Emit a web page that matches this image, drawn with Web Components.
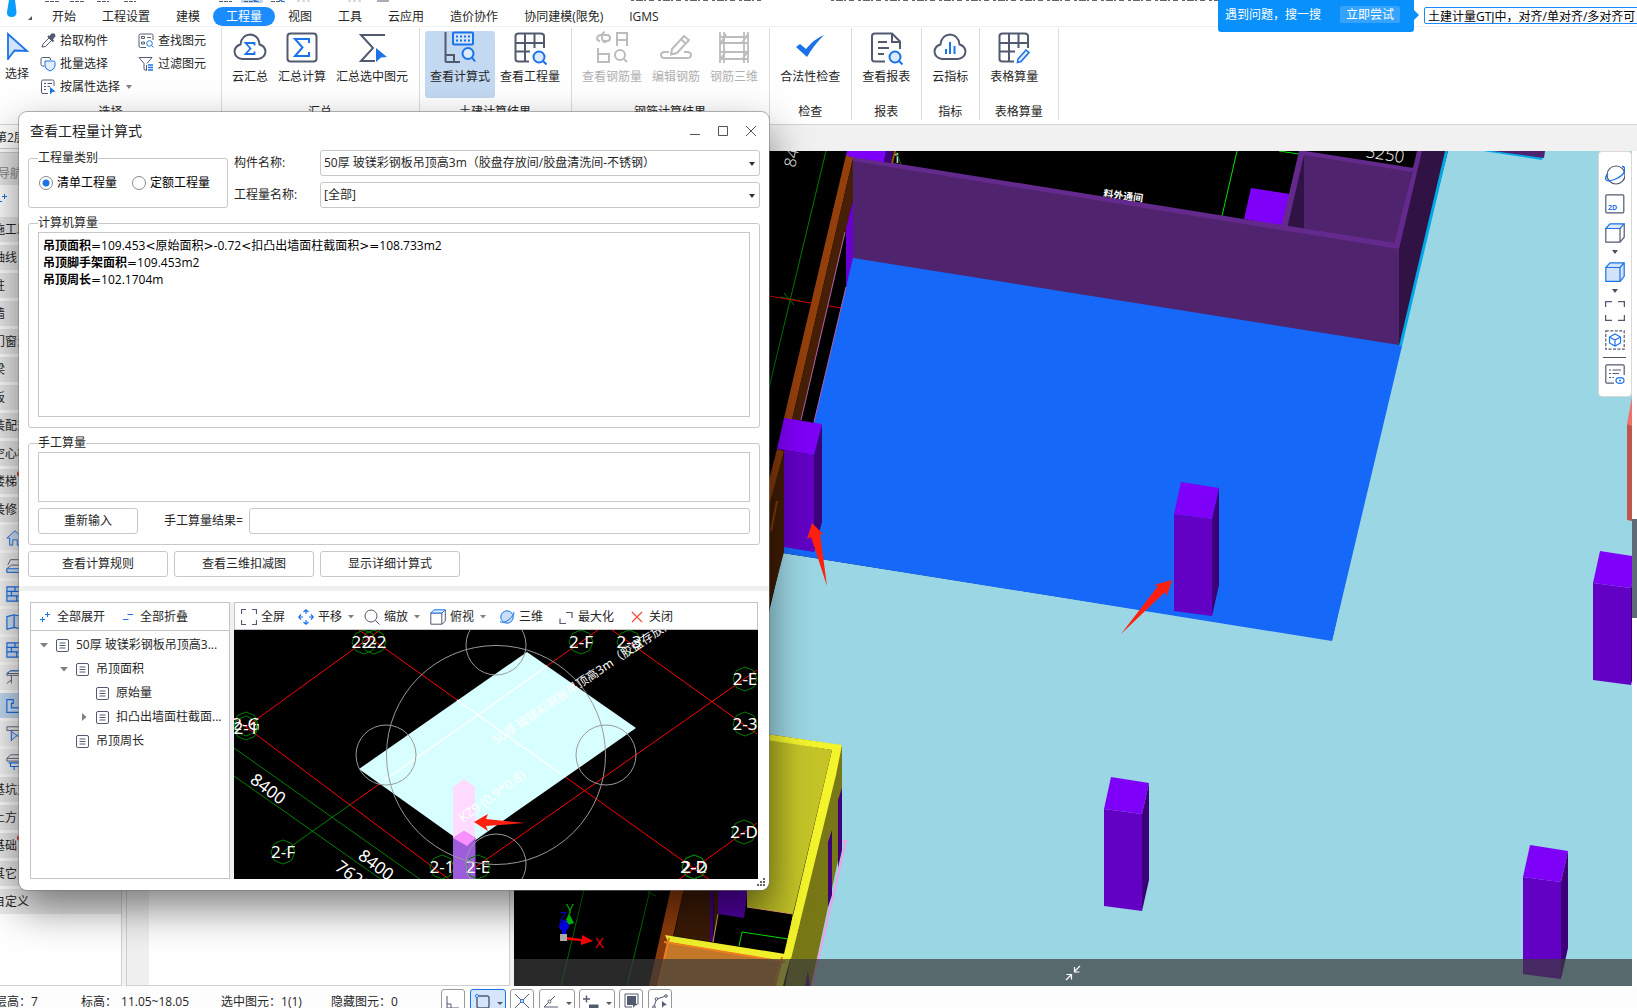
<!DOCTYPE html>
<html lang="zh-CN">
<head>
<meta charset="utf-8">
<title>土建计量平台</title>
<style>
html,body{margin:0;height:100%;overflow:hidden}
body{font:12px/18px "Open Sans","Noto Sans CJK SC",sans-serif;color:#262626;background:#f1f1f1}
</style>
</head>
<body>
<takeoff-app></takeoff-app>
<script>
const BASE = `*{box-sizing:border-box}button,input,textarea,select{font:inherit;color:inherit;margin:0}button{border:0;background:none;padding:0;white-space:nowrap;cursor:pointer}`;
function define(name, css, html, init) {
  const t = document.createElement('template');
  customElements.define(name, class extends HTMLElement {
    connectedCallback() {
      if (this.shadowRoot) return;
      const r = this.attachShadow({mode: 'open'});
      t.innerHTML = `<style>${BASE}${css}</style>` + (typeof html === 'function' ? html(this) : html);
      r.appendChild(t.content.cloneNode(true));
      if (init) init(this, r);
    }
  });
}

/* ---------- icons: [viewBox size, markup] ---------- */
const G = 'stroke="#525a70" fill="none"', B = 'stroke="#1a73e8" fill="none"', L = 'stroke="#bcbcbc" fill="none"';
const lens = `<circle cx="23" cy="23" r="5.5" fill="#dceafc" stroke="#1a73e8" stroke-width="2"/><path d="M27 27l3.500 3.500" ${B} stroke-width="2"/>`;
const page = `<rect x=".5" y=".5" width="12" height="12" rx="1.500" ${G}/><path d="M3.500 4h6M3.500 6.500h6M3.500 9h6" ${G}/>`;
const ICONS = {
  cursor: [28, `<path d="M5 2v25l6.500-8.500L24 19z" fill="#d3e3fa" stroke="#1a73e8" stroke-width="1.800"/>`],
  pick: [16, `<path d="M2 14l1-3 6-6 2.500 2.500-6 6z" ${G}/><path d="M8 3l5.500 5.500M9.500 4.500L12 1.500q2-1 2.500 1.500l-3 3.500z" stroke="#525a70" stroke-width="2" fill="#525a70"/>`],
  batch: [16, `<path d="M4.500 10H2.500Q1 10 1 8.500V3Q1 1.500 2.500 1.500H9Q10.500 1.500 10.500 3v1" ${G}/><path d="M5 5h8.500Q15 5 15 6.500V10Q14.500 13.500 10 15 5.500 13.500 5 10z" fill="#e3eefc" stroke="#1a73e8"/>`],
  attr: [16, `<path d="M8 14.500H3Q1.500 14.500 1.500 13V2.500Q1.500 1 3 1h9.500Q14 1 14 2.500V7" ${G}/><path d="M4 4.500h2M7.500 4.500H12M4 7.500h2M7.500 7.500H10M4 10.500h2" ${G}/><path d="M10 8l5.500 4.500-3 .5-2.500 2.500z" fill="#1a73e8"/>`],
  find: [16, `<path d="M8 14.500H2.500Q1 14.500 1 13V2.500Q1 1 2.500 1h11Q15 1 15 2.500V7" ${G}/><path d="M3.500 3.500h3v2h-3zM3.500 9h3v2h-3zM9 4.500h4" ${G}/><circle cx="11.500" cy="10.500" r="2.800" ${B}/><path d="M13.500 12.500l2 2" ${B}/>`],
  filter: [16, `<path d="M1 1.500h13L9 7.500M1 1.500l5 6v6l2.500 1V9" ${G}/><path d="M10 9h5M10 11.500h5M10 14h5" ${B} stroke-width="1.400"/>`],
  cloudsum: [34, `<path d="M9 28Q2 27 1.500 20.500 2 15 7.500 13.500 8.500 4 17 3.500 25.500 4 26.500 13.500 32 15 32.500 20.500 32 27 25 28z" ${G} stroke-width="2"/><path d="M21.500 14.500v-2.500H12.500l5 5.500-5 5.500h9V20.500" ${B} stroke-width="1.800"/>`],
  sum: [34, `<rect x="2.500" y="2.500" width="29" height="28" rx="3" ${G} stroke-width="2"/><path d="M24 12V8H10l7.500 8.500L10 25h14v-4" ${B} stroke-width="2"/>`],
  sumsel: [34, `<path d="M30 4H6l12 13L6 30h14" ${G} stroke-width="2"/><path d="M21 17l11 9-6 .5-5 4.500z" fill="#1a73e8"/>`],
  formula: [34, `<path d="M2.500 1v29q0 1 1 1H17M3 24h8v6" ${G} stroke-width="2"/><rect x="10" y="1.500" width="20" height="12" rx="1" fill="#d3e3fa" stroke="#1a73e8" stroke-width="2"/><path d="M13 5.500h15M13 9.500h15" stroke="#1a73e8" stroke-width="2" stroke-dasharray="2 2"/><circle cx="25" cy="22.500" r="5.500" fill="#dceafc" stroke="#1a73e8" stroke-width="2"/><path d="M29 26.500l3 4" ${B} stroke-width="2"/>`],
  table: [34, `<path d="M16 30.500H5.500Q2.500 30.500 2.500 28V5Q2.500 2.500 5.500 2.500h22Q31 2.500 31 5v12M2.500 12h28M2.500 20.500H17M12 2.500v28M21.500 2.500V17" ${G} stroke-width="2"/><g transform="translate(3 3)">${lens}</g>`],
  rebarq: [34, `<path d="M10 1q-4 1-3 6 1 5 4 4M2 7q1-3 4-3h6q3 0 3 3t-3 3H9M2 7q0 3 3 3" ${L} stroke-width="2"/><path d="M22 15V2h10v13M22 9h10M3 17v14h12M3 23h11v7" ${L} stroke-width="2"/><circle cx="25" cy="24" r="5" ${L} stroke-width="2"/><path d="M29 28l3 3" ${L} stroke-width="2"/>`],
  rebare: [34, `<path d="M13 18L25 5l5 4-12 13-6 1.500zM22 8l5 5M10 21H6q-4 0-4 3t4 3h22q4 0 4-3t-4-3h-3" ${L} stroke-width="2"/>`],
  rebar3: [34, `<path d="M3 1v31M7 1v31M27 1v31M31 1v31M3 6h28M3 12h28M3 21h28M3 28h28M3 14L9 3M25 12L31 3M3 29l6-9M25 29l6-9" ${L} stroke-width="1.800"/>`],
  check: [34, `<path d="M3 16l4-3 6 5Q21 8 31 4 21 14 14 26z" fill="#1a73e8"/>`],
  report: [34, `<path d="M16 30.500H6Q3 30.500 3 28V5Q3 2.500 6 2.500h17l8 8V18M23 3v8h8M9 11h9M9 17h11M9 23h6" ${G} stroke-width="2"/><g transform="translate(3 3)">${lens}</g>`],
  cloudbar: [34, `<path d="M9 28Q2 27 1.500 20.500 2 15 7.500 13.500 8.500 4 17 3.500 25.500 4 26.500 13.500 32 15 32.500 20.500 32 27 25 28z" ${G} stroke-width="2"/><path d="M13 23v-5M17 23V11M21.500 23v-8" ${B} stroke-width="2"/>`],
  sheet: [34, `<path d="M17 30.500H5.500Q2.500 30.500 2.500 28V5Q2.500 2.500 5.500 2.500h22Q31 2.500 31 5v12M2.500 12h28M2.500 20.500H18M12 2.500v28M21.500 2.500V17" ${G} stroke-width="2"/><path d="M21 28l8-9 3 2.500-8 9-3.500 1z" fill="#dceafc" stroke="#1a73e8" stroke-width="1.600"/>`],
  full: [16, `<path d="M.5 5V.5H5M11 .5h4.500V5M15.500 11v4.500H11M5 15.500H.5V11" ${G} stroke-width="1.200"/>`],
  pan: [16, `<path d="M5.500 3L8 .8 10.500 3M5.500 13L8 15.200 10.500 13M3 5.500L.8 8 3 10.500M13 5.500L15.200 8 13 10.500M8 1v4M8 11v4M1 8h4M11 8h4" ${B} stroke-width="1.200"/>`],
  zoom: [16, `<circle cx="7" cy="7" r="6" ${G}/><path d="M11.500 11.500l4 4" ${G}/>`],
  cube: [16, `<path d="M.8 4h11v11.200h-11z" ${G}/><path d="M12 15.200l3.300-3V1" ${G}/><path d="M.8 4L4 .8h11.300L12 4z" fill="#dceafc" stroke="#1a73e8"/>`],
  cubeb: [20, `<path d="M.8 5.500L5 .8h14.200v13.500l-4 5H.8zM15 5.500l4.200-4.700M.8 5.500H15v14" fill="#d3e3fa" stroke="#1a73e8" stroke-width="1.200"/>`],
  cubeg: [20, `<path d="M.8 5.500H15v13.700H.8zM15 19.200l4.200-5V1" ${G} stroke-width="1.200"/><path d="M.8 5.500L5 .8h14.200L15 5.500z" fill="#dceafc" stroke="#1a73e8" stroke-width="1.200"/>`],
  orbit: [16, `<circle cx="8" cy="8" r="6.200" fill="#c9defa" stroke="#1a73e8"/><path d="M1 12.500Q4 15 10 10.500 16.500 5 14.500 3" fill="none" stroke="#1a73e8"/>`],
  orbitg: [20, `<circle cx="11" cy="10" r="9" ${G} stroke-width="1.200"/><path d="M17 1.500q3.500 0 2.500 4.500-1 5-10 8.500Q2 17 .8 14.500 0 12 3 8.500" ${B} stroke-width="1.300"/>`],
  two: [20, `<rect x=".8" y=".8" width="18" height="18" rx="1" ${G} stroke-width="1.200"/><text x="3" y="16" font-family="Open Sans" font-weight="700" font-size="7" fill="#1a73e8">2D</text>`],
  fullb: [20, `<path d="M.6 6V.6H7M13 .6h6.400V6M19.400 14v5.400H13M7 19.400H.6V14" ${G} stroke-width="1.300"/>`],
  iso: [20, `<rect x=".8" y=".8" width="18.400" height="18.400" ${G} stroke-width="1.200" stroke-dasharray="3 1.500"/><path d="M10 4l5.500 3v6L10 16l-5.500-3V7zM4.500 7L10 10l5.500-3M10 10v6" ${B} stroke-width="1.200"/>`],
  eye: [20, `<path d="M9 19.200H2Q.8 19.200.8 18V2Q.8.8 2 .8h16q1.200 0 1.200 1.200v9M4 6h2M7.500 6H16M4 9.500h2M7.500 9.500H14M4 13.500h2M7.500 13.500H9" ${G} stroke-width="1.200"/><ellipse cx="15" cy="16.500" rx="4" ry="2.800" ${B} stroke-width="1.200"/><circle cx="15" cy="16.500" r="1" fill="#1a73e8"/>`],
  max: [16, `<path d="M8 3.500h6V9M2 9.500v5h6" ${G} stroke-width="1.200"/>`],
  x: [16, `<path d="M3 3l10 10M13 3L3 13" stroke="#f04a3e" fill="none" stroke-width="1.200"/>`],
  plus2: [10, `<path d="M7.500 0v5M5 2.500h5M2.500 5v5M0 7.500h5" ${B}/>`],
  minus2: [10, `<path d="M4.500 2.500H10M0 7.500h5.500" ${B}/>`],
  doc: [13, page],
  down: [10, `<path d="M1 3h8L5 7.500z" fill="#808080"/>`],
  right: [10, `<path d="M3 1v8l4.500-4z" fill="#808080"/>`],
  house: [20, `<path d="M1 10L10 2l9 8h-3v8h-3.500v-6h-5v6H4v-8z" fill="#d3e3fa" stroke="#1a73e8"/>`],
  roof: [20, `<path d="M2 9l3-6h14v6M1 13l5-4h14v8H1zM1 17h19" ${G}/><path d="M1 13h18v4H1z" fill="#d3e3fa" stroke="#1a73e8"/>`],
  brick: [20, `<path d="M1 2h18v16H1zM1 7h18M1 12h18M10 2v5M6 7v5M12 12v6" fill="#d3e3fa" stroke="#1a73e8" stroke-width="1.300"/>`],
  fold: [20, `<path d="M1 4l8-2 9 2v14l-9-2-8 2zM9 2v14" fill="#d3e3fa" stroke="#1a73e8" stroke-width="1.300"/>`],
  beam: [20, `<path d="M1 5l4-3h14v5H1zM6 7v9M6 12l-5 4M1 5h18" ${G}/><path d="M1 5l4-3h14" ${B}/>`],
  ceil: [20, `<path d="M1 3h7v4H6v5h13v5H1z" fill="#d3e3fa" stroke="#1a73e8" stroke-width="1.300"/>`],
  hang: [20, `<path d="M1 2h18M1 2v4h18M6 6v12" ${G}/><path d="M6 7l12 9V7L6 17z" fill="#d3e3fa" stroke="#1a73e8"/>`],
  pier: [20, `<path d="M1 6l4-4h14v4zM1 6v3h18" ${G}/><path d="M3 11h16M5 11v4h14M9 15v4" ${B} stroke-width="1.300"/>`]
};
define('ui-icon', ':host{display:block;flex:none}svg{display:block;width:100%;height:100%}', h => {
  const [s, m] = ICONS[h.getAttribute('name')];
  h.style.width = h.style.height = (h.getAttribute('size') || s) + 'px';
  return `<svg viewBox="0 0 ${s} ${s}" aria-hidden="true">${m}</svg>`;
});

/* ---------- top: tabs ---------- */
define('menu-tabs', `
:host{display:flex;height:27px;flex:none;background:#fff;border-bottom:1px solid #f0f0f0;align-items:flex-end;position:relative}
.logo{width:39px;height:26px;flex:none}
nav{display:flex;height:19px}
button{padding:0 13px;line-height:19px;border-radius:10px}
button[aria-current]{background:#1a8cff;color:#fff}
.slivers{position:absolute;left:39px;top:0;width:1180px;height:3px}
.tip{position:absolute;right:223px;top:0;height:32px;width:196px;background:#0a90fa;color:#fff;border-radius:0 0 3px 3px;display:flex;justify-content:space-between;align-items:center;padding:0 14px 3px 7px;z-index:2}
.tip::after{content:"";position:absolute;right:-5px;top:10px;border:5px solid transparent;border-right:0;border-left-color:#0a90fa}
.tip button{background:#35a3fb;border-radius:2px;width:60px;padding:0;height:17px;line-height:17px}
.search{position:absolute;left:calc(100% - 213px);top:7px;width:240px;height:17px;border:1px solid #1a8cff;border-radius:2px;padding:1px 3px 0;background:#fff;color:#000;line-height:15px}`,
`<svg class="logo" viewBox="0 0 39 26" aria-hidden="true"><path d="M9 0h6l1.500 12q0 5-5 5t-4.500-5z" fill="#0a9cff"/><path d="M32 16v4h-4z" fill="#555"/></svg>
<svg class="slivers" viewBox="0 0 1180 3" aria-hidden="true"><path d="M202 0h22v3h-22z" fill="#c3d9f1"/><path d="M6 1.500h14M31 1.500h14M58 1.500h12M85 1.500h12M180 1.500h13M205 1.500h14M232 1.500h12" stroke="#525a70" stroke-dasharray="4 1"/><path d="M214 0l6 2M240 0l6 2" stroke="#1a73e8"/><path d="M258 1h14M309 1h15" stroke="#bbb" stroke-dasharray="3 2"/><path d="M338 1h12" stroke="#525a70"/><path d="M592 .5h130M792 .5h388" stroke="#666" stroke-dasharray="3 2 7 1 2 3 5 4"/></svg>
<nav><button>开始</button><button>工程设置</button><button>建模</button><button aria-current="page">工程量</button><button>视图</button><button>工具</button><button>云应用</button><button>造价协作</button><button>协同建模(限免)</button><button>IGMS</button></nav>
<div class="tip"><span>遇到问题，搜一搜</span><button>立即尝试</button></div>
<input class="search" aria-label="搜索" value="土建计量GTJ中，对齐/单对齐/多对齐可">`);

/* ---------- ribbon ---------- */
define('ribbon-button', `
:host{display:block}
button{display:flex;flex-direction:column;align-items:center;padding:0 5px;height:67px;border-radius:3px;width:100%}
span{margin-top:3px}
:host([active]) button{background:#c3d9f1}
:host([disabled]) button{color:#b0b0b0}`,
h => `<button ${h.hasAttribute('disabled') ? 'disabled' : ''}><ui-icon name="${h.getAttribute('icon')}" size="34"></ui-icon><span><slot></slot></span></button>`);
define('ribbon-mini', `
:host{display:block}
button{display:flex;align-items:center;gap:4px;height:23px}
svg{margin-left:2px}`,
h => `<button><ui-icon name="${h.getAttribute('icon')}" size="16"></ui-icon><slot></slot>${h.hasAttribute('menu') ? '<svg width="7" height="4" aria-hidden="true"><path d="M0 0h6L3 4z" fill="#808080"/></svg>' : ''}</button>`);
define('ribbon-group', `
:host{display:flex;flex-direction:column;border-right:1px solid #dcdcdc;padding:0 6px 0 5px;height:92px;justify-content:space-between}
.items{display:flex;margin-top:3px}
.cap{text-align:center;line-height:15px;height:16px}`,
h => `<div class="items"><slot></slot></div><div class="cap">${h.getAttribute('label')}</div>`);
define('ribbon-bar', `
:host{display:flex;flex:none;height:98px;padding-top:1px;background:#fff;border-bottom:1px solid #d4d4d4}
.first{width:222px;padding:0}
.col{display:flex;flex-direction:column;margin-top:-2px}
.c1{margin-left:6px;width:98px}
.sel{width:34px;display:flex;flex-direction:column;align-items:center;margin-top:1px}
.sel span{margin-top:5px}
.last{width:79px}`,
`<ribbon-group class="first" label="选择"><button class="sel"><ui-icon name="cursor" size="28"></ui-icon><span>选择</span></button>
<div class="col c1"><ribbon-mini icon="pick">拾取构件</ribbon-mini><ribbon-mini icon="batch">批量选择</ribbon-mini><ribbon-mini icon="attr" menu>按属性选择</ribbon-mini></div>
<div class="col"><ribbon-mini icon="find">查找图元</ribbon-mini><ribbon-mini icon="filter">过滤图元</ribbon-mini></div></ribbon-group>
<ribbon-group label="汇总"><ribbon-button icon="cloudsum">云汇总</ribbon-button><ribbon-button icon="sum">汇总计算</ribbon-button><ribbon-button icon="sumsel">汇总选中图元</ribbon-button></ribbon-group>
<ribbon-group label="土建计算结果"><ribbon-button active icon="formula">查看计算式</ribbon-button><ribbon-button icon="table">查看工程量</ribbon-button></ribbon-group>
<ribbon-group label="钢筋计算结果"><ribbon-button disabled icon="rebarq">查看钢筋量</ribbon-button><ribbon-button disabled icon="rebare">编辑钢筋</ribbon-button><ribbon-button disabled icon="rebar3">钢筋三维</ribbon-button></ribbon-group>
<ribbon-group label="检查"><ribbon-button icon="check">合法性检查</ribbon-button></ribbon-group>
<ribbon-group label="报表"><ribbon-button icon="report">查看报表</ribbon-button></ribbon-group>
<ribbon-group label="指标"><ribbon-button icon="cloudbar">云指标</ribbon-button></ribbon-group>
<ribbon-group class="last" label="表格算量"><ribbon-button icon="sheet">表格算量</ribbon-button></ribbon-group>`);

/* ---------- left navigation ---------- */
const NAV = ['施工段','轴线','柱','墙','门窗洞','梁','板','装配式','空心板','楼梯*','装修','#house','#roof','#brick','#fold','#brick','#beam','#ceil!','#hang','#pier','基坑支护','土方','基础*','其它','自定义'];
define('nav-panel', `
:host{display:flex;flex-direction:column;width:122px;flex:none;overflow:hidden;background:#fff;border-right:1px solid #d0d0d0;border-bottom:1px solid #d0d0d0}
.floor{height:24px;line-height:25px;border-bottom:1px solid #ccc;text-indent:-5px;flex:none}
.head{margin-top:3px;height:33px;line-height:42px;background:#e8e8e8;color:#888;text-indent:-2px;border-top:1px solid #ccc;flex:none}
.add{height:32px;padding:9px 0 0;margin-left:-3px;flex:none}
.row{display:block;width:100%;height:25px;margin-bottom:3px;flex:none;line-height:25px;background:#eaeaea;text-align:left;text-indent:-7px;position:relative}
.row.ic{background:#f4f4f4;padding:3px 6px}
.row.on{background:#c3d9f1}
i{position:absolute;left:17px;top:2px;width:6px;height:6px;border-radius:3px;background:#e02020}`,
`<div class="floor">第2层</div><div class="head">导航栏</div><div class="add"><ui-icon name="plus2" size="10"></ui-icon></div>` +
NAV.map(n => n[0] === '#' ? `<button class="row ic ${n.endsWith('!') ? 'on' : ''}" aria-label="构件"><ui-icon name="${n.replace(/[#!]/g, '')}" size="18"></ui-icon></button>` : `<button class="row">${n.replace('*', '')}${n.endsWith('*') ? '<i></i>' : ''}</button>`).join(''));

define('list-panel', `
:host{display:block;flex:none;width:384px;margin:26px 4px 0;border:1px solid #d0d0d0;background:linear-gradient(90deg,#f0f0f0 22px,#fff 22px)}`, '');

/* ---------- main 3D view ---------- */
const col = (x, y) => `<g transform="translate(${x} ${y})"><path d="M0 0L38 6 31 37-7 32z" fill="#7f00f8"/><path d="M-7 32L31 37V134L-7 129z" fill="#6200c4"/><path d="M31 37L38 6V103L31 134z" fill="#3c0078"/></g>`;
const P = (pts, c) => `<polygon points="${pts}" fill="${c}"/>`;
const Ln = (d, c, w = 1) => `<path d="${d}" stroke="${c}" fill="none" stroke-width="${w}"/>`;
define('model-view', `
:host{display:flex;flex:1;min-width:0;margin-top:26px;position:relative;background:#000}
.scene{flex:1;min-width:0;width:100%;height:100%;display:block}
.rail{width:5px;flex:none;background:linear-gradient(#fff 0 368px,#5f6b75 368px 467px,#fff 467px)}
.tools{position:absolute;right:5px;top:0;width:34px;height:246px;background:#fff;border:1px solid #d8d8d8;border-radius:4px;display:flex;flex-direction:column;align-items:center;padding:13px 1px 0 0}
.tools button{margin-bottom:9px;height:20px}
.tools .m{margin-bottom:19px;position:relative}
.m::after{content:"";position:absolute;left:7px;top:27px;border:3px solid transparent;border-top:4px solid #4a5060;border-bottom:0}
hr{width:23px;border:0;border-top:1px solid #555;margin:-2px 0 6px}
.fold{position:absolute;left:0;right:5px;bottom:0;height:27px;background:rgba(59,59,59,.7);display:flex;justify-content:center;align-items:center}
svg{display:block}`,
`<svg class="scene" viewBox="514 151 1118 835" preserveAspectRatio="xMinYMin slice" font-family="Open Sans,Noto Sans CJK SC,sans-serif">
<defs><linearGradient id="y" x1="0" x2="1"><stop offset="0" stop-color="#a8a820"/><stop offset=".6" stop-color="#c4c428"/></linearGradient></defs>
<rect x="514" y="151" width="1118" height="835" fill="#000"/>
${Ln('M826 151L769 388','#008000')}${Ln('M784 293l10 12M780 297l20 4','#008000')}${Ln('M769 296L841 308','#e00000')}
${Ln('M584 890L561 986M650 890L627 986M648 892l8 4','#006c00')}
${Ln('M1237 151L1222 216M1279 151L1299 154','#00e000')}
<text transform="translate(795 168) rotate(-78)" fill="#fff" font-size="16" font-weight="300">8400</text>
<text transform="translate(1365 157) rotate(9)" fill="#fff" font-size="17" font-weight="300">5250</text>
<text transform="translate(1103 197) rotate(7)" fill="#fff" font-size="10" font-weight="700">料外通间</text>
<text x="893" y="163" fill="#fff" font-size="14">1</text>
${P('1448,151 1632,151 1632,986 808,986 840,841 838,745 760,733 760,650 783,553 1332,640 1399,345','#9bd6e4')}
${P('853,250 1402,340 1402,346 1332,641 783,553 784,548 814,422 846,287','#1568f8')}
${P('853,158 1399,246 1399,345 853,258','#4f236e')}
${P('1251,188 1290,194 1282,226 1244,219','#7f00f8')}
${P('1304,154 1412,171 1396,244 1287,227','#4f236e')}${P('1304,154 1304,230 1286,227','#301244')}
${P('1299,151 1305,151 1414,168 1412,172 1304,155 1287,229 1281,228','#63298d')}
${P('1417,151 1423,151 1400,249 1394,246','#63298d')}
${P('850,156 1200,212 1396,243 1399,249 1200,217 853,161','#63298d')}
${P('1422,151 1445,151 1400,346 1399,345 1399,249','#301244')}
${P('1445,151 1448,151 1402,346 1399,346','#00a8e8')}
${P('1483,151 1545,151 1542,160','#00a8e8')}${P('1493,151 1545,151 1544,158','#4f236e')}
${P('847,151 886,151 884,162 846,156','#7f00f8')}${P('886,151 893,151 891,163 884,162','#3c0078')}
${Ln('M892 163L895 151','#a05010',2)}${Ln('M896 152l5 12','#008000')}
${P('846,155 853,158 792,420 784,418','#94400c')}${P('853,158 853,200 801,421 792,420','#461f06')}
${P('853,200 853,258 846,287 846,228','#6a00d0')}
${Ln('M845 232L801 420M846 287L814 422','#b060b0')}
${P('777,449 784,451 769,512 769,480','#84380a')}${P('784,451 784,552 771,601 765,620 765,520','#401c06')}
${Ln('M777 501L771 531','#84380a',2)}
${P('784,418 822,424 814,455 777,449','#7f00f8')}${P('784,450 814,455 814,552 784,547','#6200c4')}${P('814,455 822,424 822,522 814,552','#3c0078')}
${col(1181,482)}${col(1111,777)}${col(1600,551)}${col(1530,845)}
${P('1627,424 1632,425 1632,521 1627,520','#c1564f')}${P('1632,397 1632,426 1627,424','#f0706a')}
${P('812,523 824,535 820,534 827,586 811,537 807,539','#ff2010')}
${P('1172,580 1167,596 1165,592 1121,634 1158,586 1154,585','#ff2010')}
${P('671,888 684,888 673,937 665,937 654,986 649,986','#8a3b0c')}${P('665,937 673,937 662,986 649,986','#8a3b0c')}
${P('684,888 712,888 711,942 674,936','#3a1a06')}${P('710,888 714,888 713,942 710,941','#3c0078')}${P('714,888 718,888 718,912 714,935','#3a1a06')}
${P('718,888 748,888 744,918 718,914','#5000a0')}
<polygon points="760,738 832,750 793,914 747,907 747,880" fill="url(#y)"/>
${Ln('M747 907L793 914M718 914L713 942','#e0a060')}${Ln('M739 946L742 932 788 939','#00e000')}
${P('832,750 842,745 842,842 811,986 785,986','#787817')}
${P('838,800 842,788 842,850 838,868','#40007c')}${P('832,830 828,842 828,907 832,895','#40007c')}${P('808,971 805,986 810,986','#40007c')}
${P('760,733 842,745 836,775 791,959 784,954 832,750 760,739','#f4f42c')}
${P('665,935 785,954 793,914 800,922 783,986 775,986 782,962 668,942','#f0f02c')}
${P('668,942 782,961 776,986 658,986','#c4782a')}${Ln('M664 942L785 962M669 938L658 986M782 957L775 986','#f08020',2)}
${Ln('M842 841h4L812 986','#f0a0e8',2)}
<path d="M567 937l15 2v-4l11 6-12 4v-4l-14-1z" fill="#f00"/><text x="595" y="948" font-size="15" fill="#f00">X</text>
<path d="M565 922l4-9 5 10-6 2z" fill="#00c800"/><text x="566" y="914" font-size="14" fill="#00e000">Y</text>
<circle cx="564" cy="926" r="5" fill="#0000f0"/><path d="M562 926h4v10h-4z" fill="#0000f0"/><text x="560" y="921" font-size="13" fill="#0000f0">Z</text><path d="M560 934h7v7h-7z" fill="#b0b0b0"/>
</svg>
<div class="rail"></div>
<div class="tools"><button aria-label="动态观察"><ui-icon name="orbitg" size="20"></ui-icon></button><button aria-label="二维"><ui-icon name="two" size="20"></ui-icon></button><button class="m" aria-label="俯视"><ui-icon name="cubeg" size="20"></ui-icon></button><button class="m" aria-label="实体"><ui-icon name="cubeb" size="20"></ui-icon></button><button aria-label="全屏"><ui-icon name="fullb" size="20"></ui-icon></button><button aria-label="局部三维"><ui-icon name="iso" size="20"></ui-icon></button><hr><button aria-label="显示设置"><ui-icon name="eye" size="20"></ui-icon></button></div>
<div class="fold"><svg width="16" height="16" viewBox="0 0 16 16" aria-hidden="true"><path d="M15 1L9.500 6.500M9.500 2v5h5M1 15l5.500-5.500M1.500 9.500h5v5" stroke="#fff" fill="none" stroke-width="1.200"/></svg></div>`);

/* ---------- status bar ---------- */
define('status-bar', `
:host{display:flex;height:22px;flex:none;background:#fdfdfd;overflow:hidden;padding-top:3px}
dl{display:flex;margin:0;width:441px;flex:none;padding-top:4px}
div{display:flex;white-space:nowrap}
dd,dt{margin:0}
.a{width:86px;margin-left:-5px}.b{width:140px}.c{width:110px}.b dd{margin-left:4px}
button{height:25px;width:24px;border:1px solid #999;border-radius:3px;margin-right:5px;flex:none;background:#fff}
button.w{width:36px;margin-right:4px}
button.on{background:#d6e6fa;border-color:#1a73e8}
svg{display:block;margin:1px 0 0 3px}`,
`<dl><div class="a"><dt>层高：</dt><dd>7</dd></div><div class="b"><dt>标高：</dt><dd>11.05~18.05</dd></div><div class="c"><dt>选中图元：</dt><dd>1(1)</dd></div><div><dt>隐藏图元：</dt><dd>0</dd></div></dl>
<button aria-label="正交"><svg width="18" height="20"><path d="M2 4v12h12M2 12h4v4" ${G}/></svg></button>
<button class="w on" aria-label="矩形"><svg width="30" height="20"><rect x="3" y="4" width="12" height="12" rx="2" ${G} stroke-width="1.400"/><circle cx="3" cy="4" r="1.500" fill="#fff" stroke="#1a73e8"/><path d="M23 10h6l-3 3z" fill="#525a70"/></svg></button>
<button aria-label="交点"><svg width="18" height="20"><path d="M1 2l14 14M15 2L1 16" ${G}/><circle cx="8" cy="9" r="1.500" fill="#fff" stroke="#1a73e8"/></svg></button>
<button class="w" aria-label="角度"><svg width="30" height="20"><path d="M1 15L12 4M1 15h14" ${G}/><circle cx="6.500" cy="9.500" r="1.500" fill="#fff" stroke="#525a70"/><path d="M23 10h6l-3 3z" fill="#525a70"/></svg></button>
<button class="w" aria-label="偏移"><svg width="30" height="20"><path d="M0 7h7M3.500 3.500v7" ${G} stroke-width="1.400"/><path d="M6 12.500h9.500v4H6z" fill="#525a70"/><path d="M23 10h6l-3 3z" fill="#525a70"/></svg></button>
<button aria-label="复制"><svg width="18" height="20"><path d="M4 4h9v9H4z" fill="#525a70"/><path d="M2 2h13v10M2 2v13h7" ${G}/><path d="M10 9l5 4-3 .5-2 2.500z" fill="#525a70"/></svg></button>
<button aria-label="路径"><svg width="18" height="20"><path d="M2 15L4.500 7 14 4" ${G}/><path d="M10 9l5 4-3 .5-2 2.500z" fill="#525a70"/><circle cx="2" cy="15" r="1.300" fill="#fff" stroke="#525a70"/><circle cx="4.500" cy="7" r="1.300" fill="#fff" stroke="#525a70"/><circle cx="14" cy="4" r="1.300" fill="#fff" stroke="#525a70"/></svg></button>`);

/* ---------- dialog preview ---------- */
const oct = (x, y) => `<polygon points="${[0,1,2,3,4,5,6,7].map(i => (x + 12 * Math.sin(i * Math.PI / 4)).toFixed(1) + ',' + (y - 12 * Math.cos(i * Math.PI / 4)).toFixed(1)).join(' ')}" fill="none" stroke="#008000"/>`;
const node = (x, y, t) => oct(x, y) + `<text x="${x}" y="${y + 6}" text-anchor="middle" fill="#fff">${t}</text>`;
define('mini-view', ':host{display:block;background:#000;overflow:hidden}svg{display:block;width:100%;height:100%}',
`<svg viewBox="234 629 524 250" preserveAspectRatio="xMinYMin slice" font-family="Noto Sans,Noto Sans CJK SC,sans-serif" font-size="17">
${Ln('M246 726L380 629M234 717L450 879M359 629L710 879M598 629L351 803M757 669L450 884M612 629L757 733M757 822L678 879','#f00')}
${Ln('M351 803L283 851M234 747L421 879M234 775L382 879','#008000')}
${P('527,651 636,727 467,845 359,768','#d8ffff')}
${Ln('M457 699L478 714 561 773M547 665L478 714 385 779','#fff',1.4)}
${node(364,641,'2-2')}${node(374,641,'2-2')}${node(581,641,'2-F')}${node(629,641,'2-3')}${node(745,678,'2-E')}${node(745,723,'2-3')}${node(744,831,'2-D')}${node(694,866,'2-2')}${node(694,866,'2-D')}${node(246,723,'2-G')}${node(246,727,'2-1')}${node(283,851,'2-F')}${node(442,866,'2-1')}
<text transform="translate(249 781) rotate(37)" fill="#fff">8400</text><text transform="translate(357 857) rotate(37)" fill="#fff">8400</text><text transform="translate(334 868) rotate(37)" fill="#fff">7620</text>
<text transform="translate(496 744) rotate(-34)" fill="#fff" font-size="12">50厚 玻镁彩钢板吊顶高3m（胶盘存放间</text>
<path d="M464 778L475 786V837L464 845 453 837V786z" fill="#ffdcff"/><path d="M464 830L475.500 837V879H453V837z" fill="#9d5cdc"/><path d="M464 830L475.500 837 467 845 453 837z" fill="#f890ff"/>
<text transform="translate(463 822) rotate(-36)" fill="#fff" font-size="13">KZ9 (0.9*0.8)</text>
${node(478,866,'2-E')}
<g fill="none" stroke="#999"><circle cx="496" cy="754" r="109.500"/><circle cx="496" cy="644" r="30"/><circle cx="386" cy="754" r="30"/><circle cx="606" cy="754" r="30"/><circle cx="496" cy="863" r="30"/></g>
${P('474,821 488,813 486,818 525,822 486,825 488,830','#ff2010')}
</svg>`);

define('tool-button', `
:host{display:block}:host(:not([menu])){margin-right:4px}
button{display:flex;align-items:center;gap:var(--icon-gap,4px);height:26px}
svg{margin-left:2px}`,
h => `<button><ui-icon name="${h.getAttribute('icon')}" size="${h.getAttribute('size') || 16}"></ui-icon><slot></slot>${h.hasAttribute('menu') ? '<svg width="7" height="4" aria-hidden="true"><path d="M0 0h6L3 3.500z" fill="#808080"/></svg>' : ''}</button>`);

define('tree-row', `
:host{display:flex;align-items:center;height:24px;gap:7px;white-space:nowrap}
.t{width:10px;height:10px;flex:none}`,
h => {
  const l = +h.getAttribute('level'), s = h.getAttribute('state');
  h.style.paddingLeft = (8 + l * 20) + 'px';
  return `<div class="t">${s ? `<ui-icon name="${s}" size="10"></ui-icon>` : ''}</div><ui-icon name="doc" size="13"></ui-icon><slot></slot>`;
});

/* ---------- calculation dialog ---------- */
define('calc-dialog', `
:host{display:flex;flex-direction:column;position:absolute;left:19px;top:112px;width:750px;height:778px;background:#fff;border-radius:8px;box-shadow:0 0 0 1px rgba(120,120,120,.55),0 18px 42px rgba(0,0,0,.5);z-index:5;overflow:visible}
header{height:37px;display:flex;align-items:center;padding:1px 10px 0 11px;flex:none}
h1{font-size:14px;font-weight:400;margin:0;flex:1}
header button{width:16px;height:16px;margin-left:12px}
header svg{display:block;margin:auto}
.body{padding:0 9px;display:flex;flex-direction:column;gap:6px}
fieldset{margin:0;border:1px solid #c8c8c8;border-radius:3px;padding:0 9px 10px;min-width:0}
legend{padding:0;line-height:18px}
.top{display:flex;gap:6px}
.kind{width:200px;flex:none;padding-bottom:0;height:59px}
.radios{display:flex;gap:15px;padding:7px 0 0 1px}
.radios label{display:flex;align-items:center;gap:4px;color:#000}
input[type=radio]{appearance:none;width:14px;height:14px;border:1px solid #888;border-radius:7px;background:#fff}
input[type=radio]:checked{background:radial-gradient(#1a73e8 3px,#fff 4px)}
.fields{flex:1;display:grid;grid-template-columns:80px 1fr;grid-auto-rows:26px;gap:6px;align-items:center;align-content:end;min-width:0}
.sel{position:relative}
.sel::after{content:"";position:absolute;right:5px;top:12px;border:3px solid transparent;border-top:4px solid #333;border-bottom:0}
select{appearance:none;width:100%;display:block;height:26px;border:1px solid #c8c8c8;border-radius:3px;background:#fff;padding:0 3px}
.out{height:185px;border:1px solid #c8c8c8;padding:4px;line-height:17px;color:#000}
.out p{margin:0}
.out b{font-weight:700}
.out i{font-style:normal;font-family:"DejaVu Sans",sans-serif;line-height:1}
textarea{display:block;width:100%;height:50px;border:1px solid #c8c8c8;resize:none}
.res{display:flex;align-items:center;margin-top:6px}
.btn{border:1px solid #c8c8c8;border-radius:3px;background:#fff;height:26px;width:140px}
.res .btn{width:100px}
.res label{margin:0 6px 0 26px}
.res input{flex:1;height:26px;border:1px solid #c8c8c8;border-radius:3px;min-width:0}
.btns{display:flex;gap:6px}
.split{height:5px;background:#f0f0f0;margin-top:9px;flex:none}
.low{flex:1;display:flex;margin:11px 11px 11px;background:#f0f0f0;gap:4px;min-height:0}
.tree{width:200px;border:1px solid #c4c4c8;background:#fff;padding-bottom:1px}
.tree nav,.view nav{height:28px;border-bottom:1px solid #c4c4c8;display:flex;align-items:center;background:#fff;padding-top:1px}
.tree nav{padding-left:9px;gap:14px;--icon-gap:7px}
.rows{padding-top:2px}
.view{flex:1;display:flex;flex-direction:column;min-width:0}
.view nav{border:1px solid #c4c4c8;padding-left:6px;gap:12px;flex:none}
.g{display:flex;gap:9px}.g+.g{gap:11px}
mini-view{flex:1;min-height:0}
.grip{position:absolute;right:3px;bottom:3px;width:9px;height:9px}`,
`<header><h1>查看工程量计算式</h1>
<button aria-label="最小化"><svg width="12" height="12"><path d="M1 9.500h10" stroke="#555"/></svg></button><button aria-label="最大化"><svg width="12" height="12"><path d="M1.500 1.500h9v9h-9z" stroke="#555" fill="none"/></svg></button><button aria-label="关闭窗口"><svg width="12" height="12"><path d="M1 1l10 10M11 1L1 11" stroke="#555"/></svg></button></header>
<div class="body">
<div class="top"><fieldset class="kind"><legend>工程量类别</legend><div class="radios"><label><input type="radio" name="k" checked>清单工程量</label><label><input type="radio" name="k">定额工程量</label></div></fieldset>
<div class="fields"><label for="part">构件名称:</label><div class="sel"><select id="part"><option>50厚 玻镁彩钢板吊顶高3m（胶盘存放间/胶盘清洗间-不锈钢）</option></select></div><label for="qty">工程量名称:</label><div class="sel"><select id="qty"><option>[全部]</option></select></div></div></div>
<fieldset><legend>计算机算量</legend><div class="out"><p><b>吊顶面积</b><i>=</i>109.453<i>&lt;</i>原始面积<i>&gt;</i>-0.72<i>&lt;</i>扣凸出墙面柱截面积<i>&gt;=</i>108.733m2</p><p><b>吊顶脚手架面积</b><i>=</i>109.453m2</p><p><b>吊顶周长</b><i>=</i>102.1704m</p></div></fieldset>
<fieldset><legend>手工算量</legend><textarea aria-label="手工算量"></textarea><div class="res"><button class="btn">重新输入</button><label for="r">手工算量结果=</label><input id="r"></div></fieldset>
<div class="btns"><button class="btn">查看计算规则</button><button class="btn">查看三维扣减图</button><button class="btn">显示详细计算式</button></div>
</div>
<div class="split"></div>
<div class="low">
<div class="tree"><nav><tool-button icon="plus2" size="10">全部展开</tool-button><tool-button icon="minus2" size="10">全部折叠</tool-button></nav>
<div class="rows"><tree-row level="0" state="down">50厚 玻镁彩钢板吊顶高3...</tree-row><tree-row level="1" state="down">吊顶面积</tree-row><tree-row level="2">原始量</tree-row><tree-row level="2" state="right">扣凸出墙面柱截面...</tree-row><tree-row level="1">吊顶周长</tree-row></div></div>
<div class="view"><nav><div class="g"><tool-button icon="full">全屏</tool-button><tool-button icon="pan" menu>平移</tool-button><tool-button icon="zoom" menu>缩放</tool-button><tool-button icon="cube" menu>俯视</tool-button></div><div class="g"><tool-button icon="orbit">三维</tool-button><tool-button icon="max">最大化</tool-button><tool-button icon="x">关闭</tool-button></div></nav><mini-view></mini-view></div>
</div>
<svg class="grip" viewBox="0 0 9 9" aria-hidden="true"><path d="M6 0h2v2H6zM3 3h2v2H3zM6 3h2v2H6zM0 6h2v2H0zM3 6h2v2H3zM6 6h2v2H6z" fill="#666"/></svg>`);

define('takeoff-app', `
:host{display:flex;flex-direction:column;height:100vh;overflow:hidden;position:relative}
main{flex:1;display:flex;min-height:0;background:#f1f1f1}`,
`<menu-tabs></menu-tabs><ribbon-bar></ribbon-bar><main><nav-panel></nav-panel><list-panel></list-panel><model-view></model-view></main><status-bar></status-bar><calc-dialog></calc-dialog>`);
</script>
</body>
</html>
